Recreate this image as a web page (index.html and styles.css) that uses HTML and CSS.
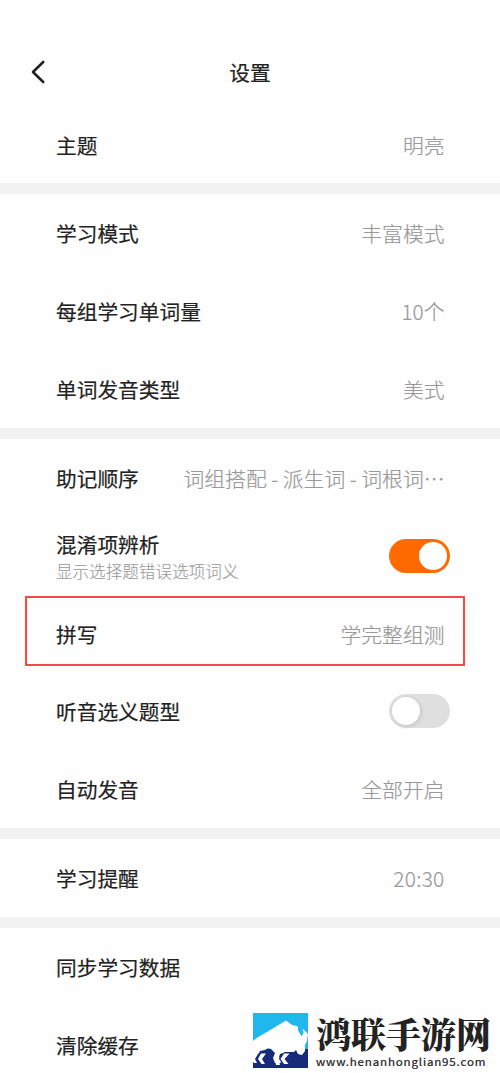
FILE: index.html
```html
<!DOCTYPE html>
<html lang="zh-CN">
<head>
<meta charset="utf-8">
<title>设置</title>
<link rel="stylesheet" href="styles.css">
</head>
<body>
<main class="screen">
  <header class="header">
    <svg class="back" viewBox="0 0 16 24" aria-label="返回"><path d="M13.2 2 3 12l10.2 10"/></svg>
    <h1 class="title">设置</h1>
  </header>
  <section class="group">
    <div class="row"><span class="label">主题</span><span class="value">明亮</span></div>
  </section>
  <section class="group">
    <div class="row"><span class="label">学习模式</span><span class="value">丰富模式</span></div>
    <div class="row"><span class="label">每组学习单词量</span><span class="value">10个</span></div>
    <div class="row"><span class="label">单词发音类型</span><span class="value">美式</span></div>
  </section>
  <section class="group">
    <div class="row"><span class="label">助记顺序</span><span class="value">词组搭配 - 派生词 - 词根词⋯</span></div>
    <div class="row row-switch">
      <div class="stack"><span class="label">混淆项辨析</span><span class="hint">显示选择题错误选项词义</span></div>
      <span class="switch on"><span class="knob"></span></span>
    </div>
    <div class="row marked"><span class="label">拼写</span><span class="value">学完整组测</span></div>
    <div class="row row-switch"><span class="label">听音选义题型</span><span class="switch"><span class="knob"></span></span></div>
    <div class="row"><span class="label">自动发音</span><span class="value">全部开启</span></div>
  </section>
  <section class="group">
    <div class="row"><span class="label">学习提醒</span><span class="value time">20:30</span></div>
  </section>
  <section class="group">
    <div class="row"><span class="label">同步学习数据</span></div>
    <div class="row"><span class="label">清除缓存</span></div>
  </section>
  <aside class="watermark">
    <svg class="logo" viewBox="0 0 55 55">
      <path fill="#20b7ef" d="M0 0h55v37H0z"/>
      <path fill="#172b7d" d="M0 36h55v19H0z"/>
      <path fill="#fff" d="M0 28 5 24 14 19 33 7.500 39 12 44 13 47 17 50 16 55 21 54 28 52 32 52 38 49 42 45 41 43 37 41 39 32 39 26 43 30 48 27 50H22L20 45 22 40 18 36 15 35 12 37 5 41 2 46 4 50H1L0 49z"/>
      <path fill="#20b7ef" d="M48.500 8c-2 3-2 5 0 7s3.500 5-.5 8.500c0-3-2.500-4-3-6.500-.5-3 1.500-6 3.500-9z"/>
      <path fill="#172b7d" d="m7 38 5-1 3 2-3 1-5 6 4 6H6l-3-6zM27 41l6-2 6 1-3 1-5 5 4 6h-5l-4-6z"/>
      <path fill="#fff" d="M8 40.500h5L9 46l3 5H8.500L5 46zM31 40.500h5.500L31.500 46l4 5H31l-3.500-5zM22 47l4 1 1 4h-4z"/>
    </svg>
    <div class="brand"><span class="brand-name">鸿联手游网</span><span class="brand-url">www.henanhonglian95.com</span></div>
  </aside>
</main>
</body>
</html>
```
FILE: styles.css
```css
* { box-sizing: border-box; }
body { margin: 0; background: #fefefe; font-family: "Noto Sans CJK SC", sans-serif; }
.screen { position: relative; width: 500px; height: 1073px; overflow: hidden; }
.header { height: 105.6px; padding: 38px 30px 0; display: grid; grid-template-columns: 16px 1fr 16px; align-items: center; }
.back { width: 16px; height: 24px; fill: none; stroke: #222; stroke-width: 2.6; stroke-linecap: round; stroke-linejoin: round; }
.title { margin: 0; text-align: center; font-size: 20.7px; line-height: 30px; font-weight: 400; color: #222; -webkit-text-stroke: .2px #222; }
.group + .group { border-top: 11px solid #f2f2f2; }
.row { height: 77.85px; padding: 0 55.5px 0 56px; display: flex; align-items: center; justify-content: space-between; white-space: nowrap; }
.row-switch { padding-right: 50px; }
.label { font-size: 20.7px; line-height: 30px; font-weight: 400; color: #222; -webkit-text-stroke: .2px #222; }
.value { font-size: 20.8px; line-height: 30px; font-weight: 300; color: #999; -webkit-text-stroke: .2px #999; }
.time { letter-spacing: .3px; }
.stack { display: flex; flex-direction: column; }
.hint { font-size: 16.6px; line-height: 24px; font-weight: 300; color: #999; -webkit-text-stroke: .1px #999; }
.marked { outline: 2px solid #f94848; outline-offset: -2px; height: 70px; margin: 1.5px 35px 6.35px 25px; padding: 6px 20.5px 0 31px; }
.switch { width: 61px; height: 34px; padding: 3px; border-radius: 17px; background: #dfdfdf; display: flex; }
.switch.on { background: #ff6a00; justify-content: flex-end; }
.knob { width: 28px; height: 28px; border-radius: 50%; background: #fff; }
.switch:not(.on) .knob { box-shadow: 1px 1px 4px rgba(0, 0, 0, .15); }
.watermark { position: absolute; left: 253px; top: 1013px; display: flex; gap: 8px; }
.logo { width: 55px; height: 55px; }
.brand { display: flex; flex-direction: column; align-items: flex-start; white-space: nowrap; }
.brand-name { font-family: "Noto Serif CJK SC", "Noto Sans CJK SC", serif; font-size: 35px; line-height: 40px; font-weight: 900; color: #222; }
.brand-url { margin-top: 1px; font-family: "Noto Sans CJK SC", sans-serif; font-size: 10.5px; line-height: 15px; font-weight: 400; letter-spacing: .75px; color: #222; -webkit-text-stroke: .2px #222; transform: scaleX(1.1); transform-origin: left; }
```
